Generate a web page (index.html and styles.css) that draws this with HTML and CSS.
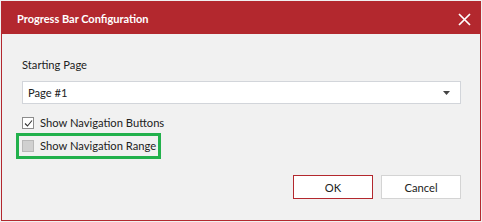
FILE: index.html
```html
<!DOCTYPE html>
<html lang="en">
<head>
    <meta charset="UTF-8">
    <title>Progress Bar Configuration</title>
    <link rel="stylesheet" href="styles.css">
</head>
<body>
    <div class="dialog">
        <div class="title-bar">
            <span class="title">Progress Bar Configuration</span>
            <svg class="close" width="13" height="13" viewBox="0 0 13 13">
                <path d="M1 1 L12 12 M12 1 L1 12" stroke="#ffffff" stroke-width="1.7" fill="none"/>
            </svg>
        </div>
        <div class="content">
            <div class="field-label">Starting Page</div>
            <div class="select">
                <span>Page #1</span>
                <svg class="arrow" width="7" height="4" viewBox="0 0 7 4">
                    <path d="M0 0 H7 L3.5 4 Z" fill="#444444"/>
                </svg>
            </div>
            <div class="check-row">
                <span class="box checked">
                    <svg width="9" height="9" viewBox="0 0 9 9">
                        <path d="M1 4.5 L3.5 7 L8 1.5" stroke="#333333" stroke-width="1.1" fill="none"/>
                    </svg>
                </span>
                <span>Show Navigation Buttons</span>
            </div>
            <div class="highlight">
                <div class="check-row">
                    <span class="box unchecked"></span>
                    <span>Show Navigation Range</span>
                </div>
            </div>
            <div class="buttons">
                <button class="btn primary">OK</button>
                <button class="btn">Cancel</button>
            </div>
        </div>
    </div>
</body>
</html>
```

FILE: styles.css
```css
body {
    margin: 0;
    background-color: #f0f0f0;
    font-family: Lato, 'Open Sans', sans-serif;
    font-size: 11.2px;
    color: #222222;
}
.dialog {
    margin: 1px;
    width: 478px;
    height: 218px;
    border: 1px solid #b3282e;
    background-color: #f1f1f1;
    display: flex;
    flex-direction: column;
}
.title-bar {
    height: 32px;
    background-color: #b3282e;
    display: flex;
    align-items: center;
    justify-content: space-between;
    padding: 0 9px 0 15px;
}
.title {
    color: #ffffff;
    font-weight: 700;
    font-size: 11px;
    margin-top: 1px;
}
.close {
    margin-top: 3px;
}
.content {
    padding: 23px 19px 0 20px;
    display: flex;
    flex-direction: column;
}
.field-label {
    line-height: 16px;
}
.select {
    margin-top: 8px;
    height: 21px;
    border: 1px solid #d2d5da;
    background-color: #ffffff;
    display: flex;
    align-items: center;
    justify-content: space-between;
    padding: 0 10px 0 5px;
}
.arrow {
    margin-top: 1px;
}
.check-row {
    display: flex;
    align-items: center;
    gap: 6px;
    line-height: 16px;
}
.content > .check-row {
    margin-top: 11px;
}
.box {
    width: 10px;
    height: 10px;
    display: flex;
    align-items: center;
    justify-content: center;
}
.box.checked {
    border: 1px solid #8c8c8c;
    background-color: #ffffff;
}
.box.unchecked {
    border: 1px solid #b8b8b8;
    background-color: #d0d0d0;
}
.highlight {
    margin: 2px 0 0 -6px;
    align-self: flex-start;
    border: 3px solid #22b14c;
    padding: 2px 2px 2px 3px;
}
.buttons {
    margin-top: 16px;
    display: flex;
    justify-content: flex-end;
    gap: 8px;
}
.btn {
    width: 80px;
    height: 24px;
    background-color: #ffffff;
    border: 1px solid #d4d4d4;
    font-family: inherit;
    font-size: 11.2px;
    color: #222222;
    padding: 0;
}
.btn.primary {
    border-color: #b3282e;
}
```
